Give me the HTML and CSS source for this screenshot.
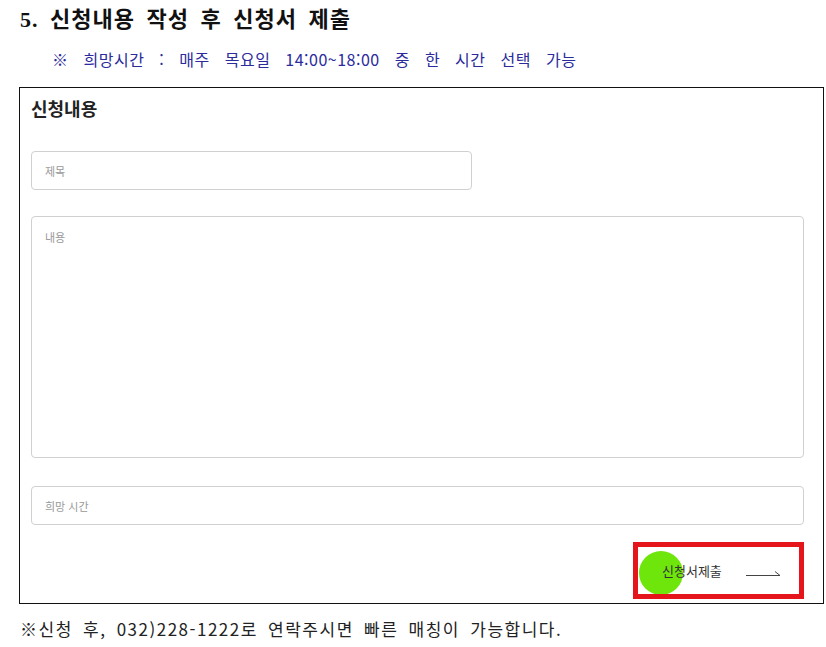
FILE: index.html
```html
<!DOCTYPE html>
<html lang="ko">
<head>
    <meta charset="UTF-8">
    <meta name="viewport" content="width=device-width, initial-scale=1.0">
    <title>신청서 제출</title>
    <link rel="stylesheet" href="styles.css">
</head>
<body>
    <h2 class="step-title">5. 신청내용 작성 후 신청서 제출</h2>
    <p class="step-note">※ 희망시간 : 매주 목요일 14:00~18:00 중 한 시간 선택 가능</p>

    <!-- 신청 폼 -->
    <form class="apply-box">
        <h3 class="apply-title">신청내용</h3>
        <input type="text" class="field field-short" placeholder="제목">
        <textarea class="field field-area" placeholder="내용"></textarea>
        <input type="text" class="field" placeholder="희망 시간">

        <div class="submit-row">
            <button type="button" class="submit-btn">
                <span class="ripple"></span>
                <span class="submit-label">신청서제출</span>
                <svg class="submit-arrow" width="36" height="8" viewBox="0 0 36 8">
                    <path d="M0 6.5 H34 L29 2.5" fill="none" stroke="#444" stroke-width="1"/>
                </svg>
            </button>
        </div>
    </form>

    <p class="after-note">※신청 후, 032)228-1222로 연락주시면 빠른 매칭이 가능합니다.</p>
</body>
</html>
```

FILE: styles.css
```css
body {
    margin: 0;
    padding: 6px 0 0 19px;
    font-family: "Noto Sans CJK KR", "Noto Sans", sans-serif;
    color: #111;
    background: #fff;
}

.step-title {
    margin: 0 0 0 1px;
    font-family: "Liberation Serif", "Noto Sans CJK KR", serif;
    font-size: 22px;
    font-weight: bold;
    line-height: 27px;
    letter-spacing: 1px;
    word-spacing: 5px;
    color: #111;
}

.step-note {
    margin: 15px 0 0 33px;
    font-size: 16px;
    line-height: 22px;
    letter-spacing: 0.5px;
    word-spacing: 10px;
    color: #2b2b9c;
}

.note-mark {
    font-size: 19px;
}

.apply-box {
    box-sizing: border-box;
    width: 805px;
    margin-top: 17px;
    padding: 6px 19px 4px 11px;
    border: 1px solid #111;
    display: flex;
    flex-direction: column;
    align-items: flex-start;
}

.apply-title {
    margin: 0;
    font-size: 18px;
    font-weight: bold;
    line-height: 28px;
    color: #222;
}

.field {
    box-sizing: border-box;
    width: 773px;
    height: 39px;
    padding: 0 13px;
    border: 1px solid #d0d0d0;
    border-radius: 4px;
    font-family: "Noto Sans CJK KR", sans-serif;
    font-size: 11px;
    color: #333;
    outline: none;
    resize: none;
}

.field::placeholder {
    color: #999;
}

.field-short {
    width: 441px;
    margin-top: 29px;
}

.field-area {
    height: 242px;
    margin-top: 26px;
    padding-top: 12px;
}

.field-area + .field {
    margin-top: 28px;
}

.submit-row {
    align-self: stretch;
    display: flex;
    justify-content: flex-end;
    margin-top: 17px;
}

.submit-btn {
    position: relative;
    box-sizing: border-box;
    width: 171px;
    height: 57px;
    padding: 0 0 0 24px;
    border: 5px solid #e4151b;
    background: #fff;
    display: flex;
    align-items: center;
    gap: 24px;
    overflow: hidden;
    cursor: pointer;
}

.ripple {
    position: absolute;
    left: 1px;
    top: 4px;
    width: 44px;
    height: 44px;
    border-radius: 50%;
    background: #6ee60c;
}

.submit-label {
    position: relative;
    font-family: "Noto Sans CJK KR", sans-serif;
    font-size: 13px;
    color: #333;
}

.submit-arrow {
    position: relative;
    margin-top: 4px;
}

.after-note {
    margin: 14px 0 0 1px;
    font-size: 17px;
    line-height: 22px;
    letter-spacing: 1.5px;
    word-spacing: 4px;
    color: #222;
}
```
